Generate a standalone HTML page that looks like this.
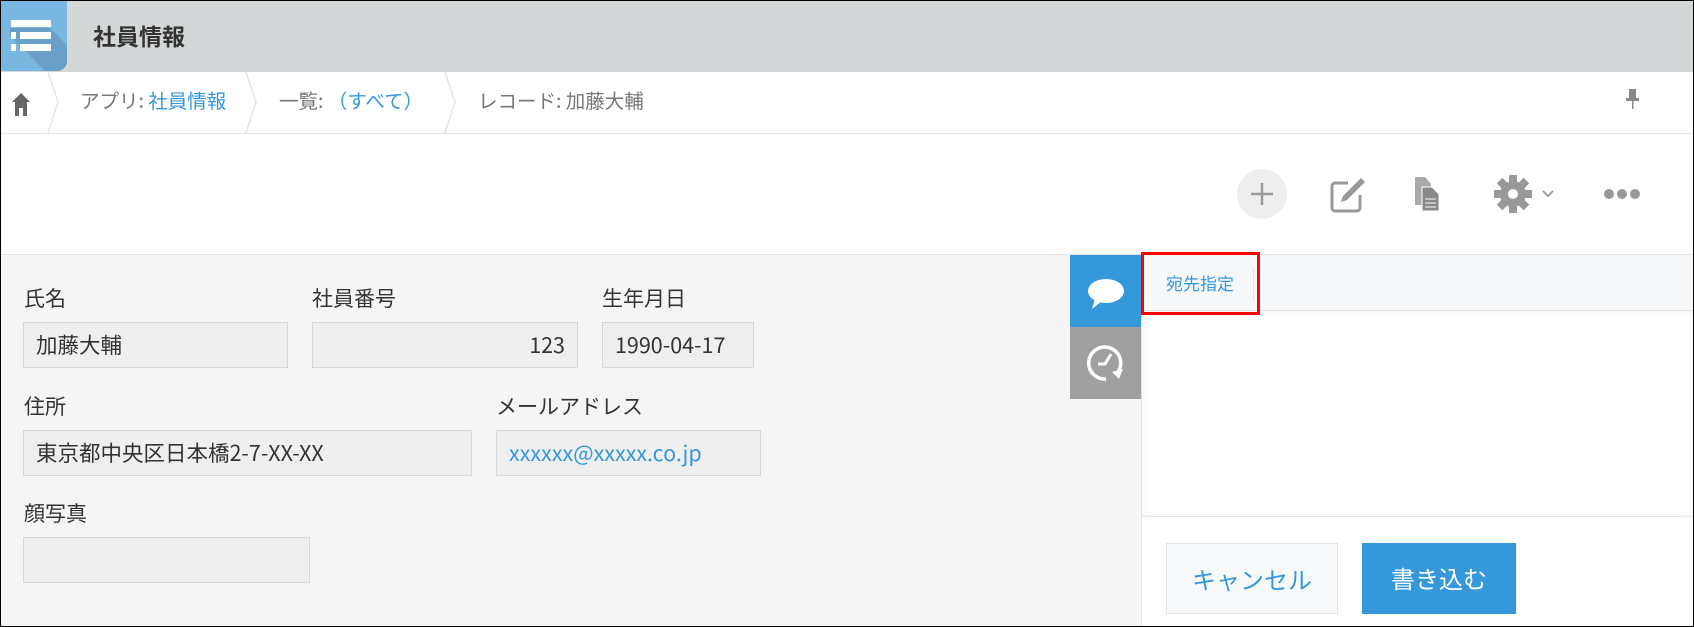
<!DOCTYPE html>
<html><head><meta charset="utf-8"><style>
*{box-sizing:border-box;margin:0;padding:0}
body{width:1694px;height:627px;overflow:hidden;font-family:"Noto Sans CJK JP","Liberation Sans",sans-serif;background:#fff;position:relative}
.a{position:absolute}
.frame{position:absolute;left:0;top:0;width:1694px;height:627px;border:1px solid #000;pointer-events:none;z-index:10}
.lbl{position:absolute;font-size:21px;color:#333;line-height:26px}
.fld{position:absolute;background:#efefef;border:1px solid #d8d8d8;font-size:21.5px;color:#333;line-height:44px;padding:0 12px;white-space:nowrap}
</style></head><body>
<div class="a" style="left:0;top:0;width:1694px;height:72px;background:#d4d7d8"></div>
<div class="a" style="left:0;top:0;width:67px;height:71px;background:#78b8e0;border-radius:0 0 10px 0;overflow:hidden">
<svg width="67" height="71"><polygon points="10,28 50,28 67,45 67,71 45,71 10,36" fill="#6aa0c7"/>
<rect x="11" y="20" width="40" height="7" fill="#fff"/><rect x="11" y="32" width="5" height="7" fill="#fff"/><rect x="20" y="32" width="31" height="7" fill="#fff"/><rect x="11" y="44" width="5" height="7" fill="#fff"/><rect x="20" y="44" width="31" height="7" fill="#fff"/></svg></div>
<div class="a" style="left:93px;top:20px;font-size:23px;font-weight:bold;color:#333;line-height:30px">社員情報</div>
<div class="a" style="left:0;top:133px;width:1694px;height:1px;background:#e3e3e3"></div>
<svg class="a" style="left:0;top:72px" width="700" height="61">
<path d="M48 0 L58 30 L48 61 M246 0 L256 30 L246 61 M445 0 L455 30 L445 61" stroke="#e3e3e3" stroke-width="1.5" fill="none"/>
<path d="M12 30 L21 21 L30 30 L27 30 L27 44 L23 44 L23 36 L19 36 L19 44 L15 44 L15 30 Z" fill="#666"/></svg>
<div class="a" style="left:80px;top:87px;font-size:19.5px;color:#777;line-height:26px">アプリ: <span style="color:#3498db">社員情報</span></div>
<div class="a" style="left:279px;top:87px;font-size:19.5px;color:#777;line-height:26px">一覧: <span style="color:#3498db">（すべて）</span></div>
<div class="a" style="left:478px;top:87px;font-size:19.5px;color:#777;line-height:26px">レコード: 加藤大輔</div>
<svg class="a" style="left:1624px;top:88px" width="16" height="24"><rect x="5" y="1" width="7" height="10" fill="#888"/><rect x="2" y="10" width="13" height="3" fill="#888"/><rect x="8" y="12" width="1.5" height="9" fill="#888"/></svg>
<svg class="a" style="left:1230px;top:165px" width="420" height="60">
<circle cx="32" cy="29" r="25" fill="#eee"/><path d="M32 18V40M21 29H43" stroke="#999" stroke-width="2.5"/>
<path d="M118 18 H105 a3 3 0 0 0 -3 3 V43 a3 3 0 0 0 3 3 H127 a3 3 0 0 0 3 -3 V30" stroke="#999" stroke-width="3" fill="none"/>
<path d="M111 37 L113 31 L131 13 L135 17 L117 35 Z" fill="#999"/>
<path d="M185 12 H195 L201 19 V40 H185 Z" fill="#aaa"/><path d="M192 22 H202 L209 29 V46 H192 Z" fill="#888" stroke="#fff" stroke-width="1"/>
<path d="M195 34H206M195 38H206M195 42H206" stroke="#fff" stroke-width="1"/>
<g transform="translate(283,29)" fill="#999"><circle r="13"/><g id="t"><rect x="-4" y="-19" width="8" height="38"/></g><use href="#t" transform="rotate(45)"/><use href="#t" transform="rotate(90)"/><use href="#t" transform="rotate(135)"/><circle r="5" fill="#fff"/></g>
<path d="M313 26 L318 31 L323 26" stroke="#999" stroke-width="1.8" fill="none"/>
<circle cx="379" cy="29" r="5" fill="#999"/><circle cx="392" cy="29" r="5" fill="#999"/><circle cx="405" cy="29" r="5" fill="#999"/></svg>
<div class="a" style="left:0;top:254px;width:1694px;height:1px;background:#e3e3e3"></div>
<div class="a" style="left:0;top:255px;width:1141px;height:372px;background:#f5f5f5"></div>
<div class="lbl" style="left:24px;top:285px">氏名</div>
<div class="fld" style="left:23px;top:322px;width:265px;height:46px">加藤大輔</div>
<div class="lbl" style="left:312px;top:285px">社員番号</div>
<div class="fld" style="left:312px;top:322px;width:266px;height:46px;text-align:right">123</div>
<div class="lbl" style="left:602px;top:285px">生年月日</div>
<div class="fld" style="left:602px;top:322px;width:152px;height:46px">1990-04-17</div>
<div class="lbl" style="left:24px;top:393px">住所</div>
<div class="fld" style="left:23px;top:430px;width:449px;height:46px">東京都中央区日本橋2-7-XX-XX</div>
<div class="lbl" style="left:496px;top:393px">メールアドレス</div>
<div class="fld" style="left:496px;top:430px;width:265px;height:46px;color:#3498db">xxxxxx@xxxxx.co.jp</div>
<div class="lbl" style="left:24px;top:500px">顔写真</div>
<div class="fld" style="left:23px;top:537px;width:287px;height:46px"></div>
<div class="a" style="left:1070px;top:255px;width:72px;height:72px;background:#3498db"></div>
<div class="a" style="left:1070px;top:327px;width:72px;height:72px;background:#a0a0a0"></div>
<svg class="a" style="left:1070px;top:255px" width="72" height="144">
<ellipse cx="36" cy="36" rx="18" ry="12" fill="#fff"/><path d="M25 44 L22 54 L32 46Z" fill="#fff"/>
<path d="M48 117 A16 16 0 1 0 36 124" stroke="#fff" stroke-width="3.5" fill="none"/><path d="M42 117 L53 114 L49 124Z" fill="#fff"/>
<path d="M28 109 H35 L41 99" stroke="#fff" stroke-width="3" fill="none"/></svg>
<div class="a" style="left:1142px;top:255px;width:552px;height:56px;background:#f7f8f9;border-bottom:1px solid #e3e3e3"></div>
<div class="a" style="left:1142px;top:311px;width:552px;height:206px;background:#fff;box-shadow:inset 0 0 8px rgba(0,0,0,.06);border-bottom:1px solid #e3e3e3"></div>
<div class="a" style="left:1141px;top:255px;width:1px;height:372px;background:#e3e3e3"></div>
<div class="a" style="left:1166px;top:271px;font-size:17px;color:#3498db;line-height:24px">宛先指定</div>
<div class="a" style="left:1253px;top:268px;width:1px;height:34px;background:#e3e3e3"></div>
<div class="a" style="left:1141px;top:252px;width:119px;height:63px;border:3px solid #f00"></div>
<div class="a" style="left:1166px;top:543px;width:172px;height:71px;background:#f7f9fa;border:1px solid #e3e3e3;color:#3498db;font-size:24px;text-align:center;line-height:69px">キャンセル</div>
<div class="a" style="left:1362px;top:543px;width:154px;height:71px;background:#3498db;color:#fff;font-size:24px;text-align:center;line-height:69px">書き込む</div>
<div class="frame"></div>
</body></html>
